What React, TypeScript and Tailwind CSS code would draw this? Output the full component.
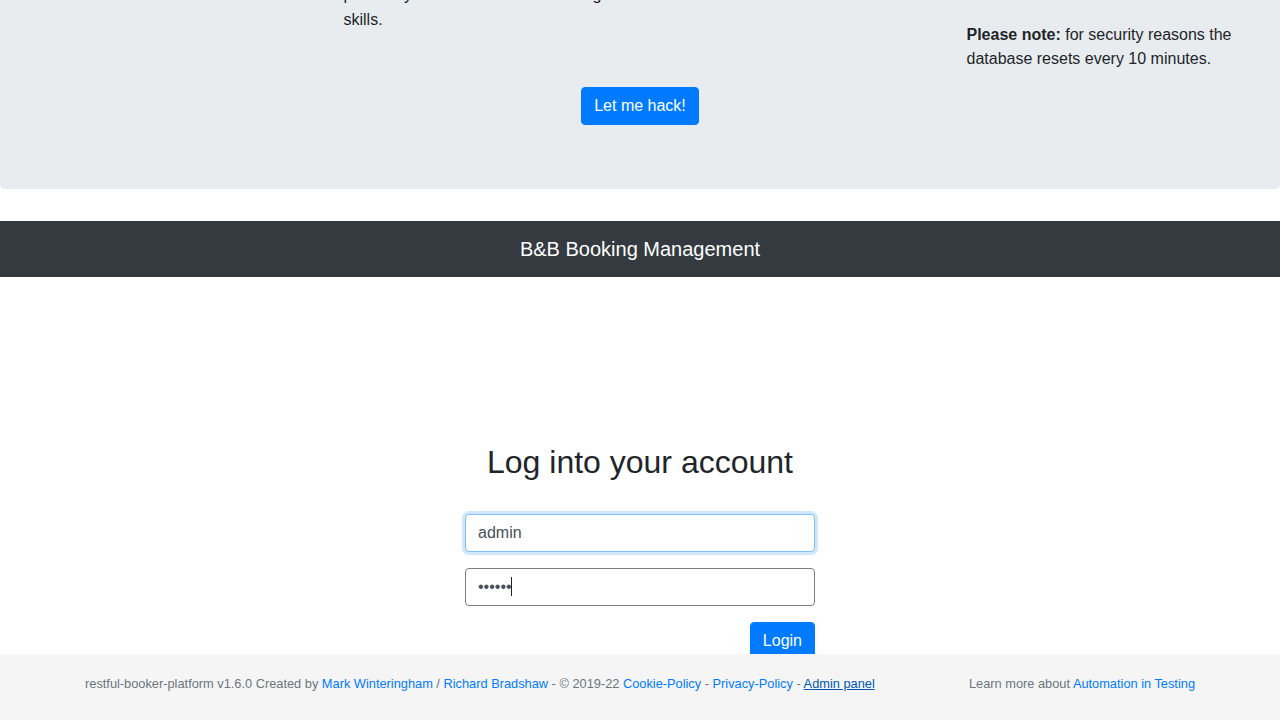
import React from 'react';

const font = "font-['Liberation_Sans',Arial,sans-serif]";

export default function App() {
  return (
    <div className={`${font} min-h-[720px] overflow-hidden bg-white text-[#212529] text-base leading-6`}>
      <div className="-mt-[80px] mb-8 rounded-b-[5px] bg-[#e9ecef] px-8 py-16">
        <div className="-mx-[15px] grid grid-cols-[1fr_2fr_1fr]">
          <div className="px-[15px]" />
          <div className="flex flex-col items-center px-[15px]">
            <p className="mb-4 w-full">
              <span className="block leading-[22px]">practise your automation and testing</span>
              <span className="block leading-7">skills.</span>
            </p>
            <button className="mt-[37px] rounded-[4px] border border-[#007bff] bg-[#007bff] px-3 py-[6px] text-white">
              Let me hack!
            </button>
          </div>
          <div className="px-[15px] pt-[39px]">
            <p>
              <span className="font-bold">Please note:</span> for security reasons the database resets every 10 minutes.
            </p>
          </div>
        </div>
      </div>

      <nav className="flex h-14 items-center justify-center bg-[#343a40]">
        <span className="text-xl text-white">B&amp;B Booking Management</span>
      </nav>

      <div className="mx-auto mt-[166px] flex w-[350px] flex-col pb-24">
        <h2 className="mb-[33px] text-center text-[32px] leading-[1.2] font-medium">Log into your account</h2>
        <input
          readOnly
          value="admin"
          className="mb-4 h-[38px] w-full rounded-[4px] border border-[#80bdff] bg-white px-3 text-[#495057] shadow-[0_0_0_3px_rgba(0,123,255,0.18)] outline-none"
        />
        <div className="relative mb-4">
          <input
            readOnly
            type="password"
            value="secret"
            className="h-[38px] w-full rounded-[4px] border border-[#7d7d7d] bg-white px-3 text-[#495057] outline-none"
          />
          <span className="absolute left-[46px] top-[9px] h-[19px] w-px bg-[#222]" />
        </div>
        <div className="flex justify-end">
          <button className="rounded-[4px] border border-[#007bff] bg-[#007bff] px-3 py-[6px] text-white">Login</button>
        </div>
      </div>

      <footer className="fixed bottom-0 left-0 right-0 h-[66px] bg-[#f5f5f5]">
        <div className="mx-auto flex w-[1140px] items-start justify-between px-[15px] pt-[20px] text-[12.8px] leading-[19px] text-[#6c757d]">
          <p>
            restful-booker-platform v1.6.0 Created by <a className="text-[#007bff]">Mark Winteringham</a> /{' '}
            <a className="text-[#007bff]">Richard Bradshaw</a> - © 2019-22 <a className="text-[#007bff]">Cookie-Policy</a> -{' '}
            <a className="text-[#007bff]">Privacy-Policy</a> - <a className="text-[#0056b3] underline">Admin panel</a>
          </p>
          <p>
            Learn more about <a className="text-[#007bff]">Automation in Testing</a>
          </p>
        </div>
      </footer>
    </div>
  );
}
